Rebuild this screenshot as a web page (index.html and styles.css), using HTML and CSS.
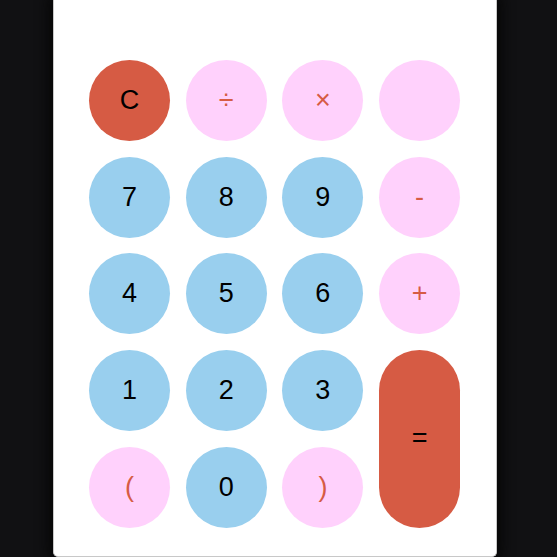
FILE: index.html
```html
<!DOCTYPE html>
<html>
<head>
<meta charset="utf-8">
<link rel="stylesheet" href="styles.css">
</head>
<body>
<div class="card">
  <div class="keys">
    <div class="key red">C</div>
    <div class="key pink op">÷</div>
    <div class="key pink op">×</div>
    <div class="key pink op"></div>
    <div class="key blue">7</div>
    <div class="key blue">8</div>
    <div class="key blue">9</div>
    <div class="key pink op">-</div>
    <div class="key blue">4</div>
    <div class="key blue">5</div>
    <div class="key blue">6</div>
    <div class="key pink op">+</div>
    <div class="key blue">1</div>
    <div class="key blue">2</div>
    <div class="key blue">3</div>
    <div class="key red equals">=</div>
    <div class="key pink op">(</div>
    <div class="key blue">0</div>
    <div class="key pink op">)</div>
  </div>
</div>
</body>
</html>
```
FILE: styles.css
```css
html, body {
  margin: 0;
  height: 100%;
}
body {
  background: #111113;
  font-family: "Liberation Sans", Arial, sans-serif;
  padding-left: 53px;
  overflow: hidden;
}
.card {
  width: 444px;
  box-sizing: border-box;
  background: #fff;
  border-left: 1px solid #c8c8c8;
  border-right: 1px solid #c8c8c8;
  border-bottom: 1px solid #c8c8c8;
  border-radius: 0 0 5px 5px;
  box-shadow: 0 0 14px 4px #050505;
  padding: 60px 0 28px 35px;
}
.keys {
  display: grid;
  grid-template-columns: repeat(4, 81px);
  grid-auto-rows: 81px;
  gap: 15.7px;
}
.key {
  border-radius: 50%;
  display: flex;
  align-items: center;
  justify-content: center;
  font-size: 27px;
  color: #000;
}
.red { background: #d65b44; }
.pink { background: #ffd1fc; }
.blue { background: #99cfee; }
.op { color: #d65b44; }
.equals {
  grid-row: span 2;
  border-radius: 40.5px;
}
```
